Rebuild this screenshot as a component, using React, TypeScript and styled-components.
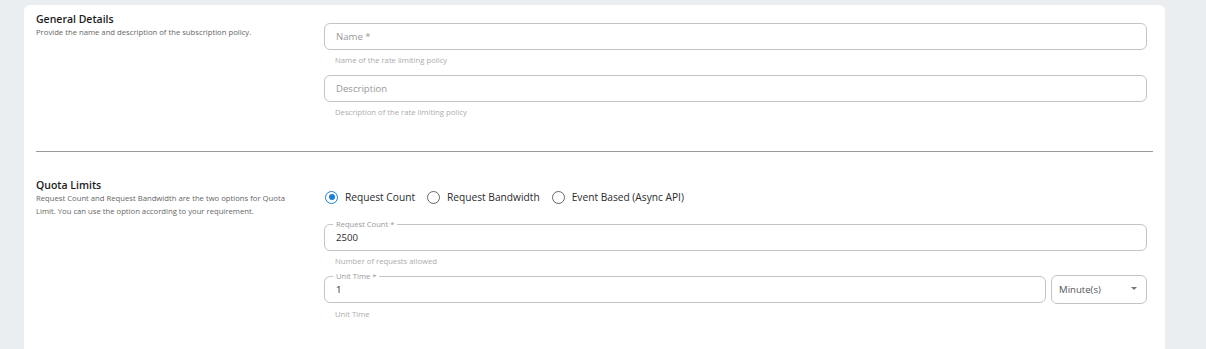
import * as React from "react"
import styled, { createGlobalStyle } from "styled-components"

const GlobalStyle = createGlobalStyle`
  html, body {
    margin: 0;
    padding: 0;
    background: #eaeef1;
    font-family: "Open Sans", "Noto Sans", sans-serif;
  }
`

const Page = styled.div`
  height: 349px;
  overflow: hidden;
  padding: 5px 41px 0 24px;
`

const Card = styled.div`
  background: #fff;
  border-radius: 6px;
  padding: 5px 12px 40px;
  min-height: 360px;
  box-sizing: border-box;
`

const Section = styled.section<{ $top: number }>`
  display: grid;
  grid-template-columns: 262px 1fr;
  column-gap: 26px;
  align-items: start;
  padding: ${p => p.$top}px 6px 0 0;
`

const Intro = styled.div`
  padding-top: 2px;
`

const Title = styled.h3`
  margin: 0;
  font-size: 10.5px;
  line-height: 14px;
  font-weight: 600;
  color: #1c1c1c;
`

const Lead = styled.p`
  margin: 0;
  font-size: 7.7px;
  line-height: 13px;
  color: #666;
`

const Fields = styled.div<{ $top: number }>`
  padding-top: ${p => p.$top}px;
  display: flex;
  flex-direction: column;
`

const FieldRow = styled.div`
  display: flex;
  align-items: flex-start;
  gap: 5px;
`

const Box = styled.div<{ $h?: number }>`
  position: relative;
  flex: 1 0 auto;
  height: ${p => p.$h ?? 27}px;
  border: 1px solid #c4c4c4;
  border-radius: 6px;
  box-sizing: border-box;
  display: flex;
  align-items: center;
  padding: 0 11px;
  font-size: 9.6px;
  color: #2b2b2b;
`

const Placeholder = styled.span`
  color: #999;
`

const Notch = styled.span`
  position: absolute;
  left: 8px;
  top: -5px;
  padding: 0 3px;
  background: #fff;
  font-size: 7.6px;
  line-height: 9px;
  color: #999;
`

const Helper = styled.div`
  font-size: 7.7px;
  line-height: 10px;
  color: #acacac;
  padding: 5px 0 0 11px;
  height: 25px;
  box-sizing: border-box;
`

const SelectBox = styled(Box)`
  flex: 0 0 96px;
  justify-content: space-between;
  padding: 0 9px 0 7px;
  margin-top: -1px;
  color: #555;
`

const Caret = styled.span`
  width: 0;
  height: 0;
  border-left: 3.5px solid transparent;
  border-right: 3.5px solid transparent;
  border-top: 3.5px solid #777;
  margin-top: -3px;
`

const Divider = styled.hr`
  margin: 24px 0 0;
  border: none;
  border-top: 1px solid #9a9a9a;
`

const RadioGroup = styled.div`
  display: flex;
  align-items: center;
  height: 18px;
  margin-bottom: 18px;
`

const RadioItem = styled.label`
  display: flex;
  align-items: center;
  gap: 7px;
  margin-right: 11px;
  font-size: 10.2px;
  color: #2b2b2b;
  cursor: pointer;
`

const Dot = styled.span<{ $on: boolean }>`
  width: 13px;
  height: 13px;
  border-radius: 50%;
  box-sizing: border-box;
  margin-left: 1px;
  border: 1.5px solid ${p => (p.$on ? "#1a7fd6" : "#666")};
  display: flex;
  align-items: center;
  justify-content: center;
  &::after {
    content: "";
    width: 6px;
    height: 6px;
    border-radius: 50%;
    background: ${p => (p.$on ? "#1a7fd6" : "transparent")};
  }
`

const options = ["Request Count", "Request Bandwidth", "Event Based (Async API)"]

export default function App() {
  const [choice, setChoice] = React.useState(0)
  return (
    <>
      <GlobalStyle />
      <Page>
        <Card>
          <Section $top={0}>
            <Intro>
              <Title>General Details</Title>
              <Lead>Provide the name and description of the subscription policy.</Lead>
            </Intro>
            <Fields $top={13}>
              <Box>
                <Placeholder>Name *</Placeholder>
              </Box>
              <Helper>Name of the rate limiting policy</Helper>
              <Box>
                <Placeholder>Description</Placeholder>
              </Box>
              <Helper>Description of the rate limiting policy</Helper>
            </Fields>
          </Section>
          <Divider />
          <Section $top={24}>
            <Intro>
              <Title>Quota Limits</Title>
              <Lead>
                Request Count and Request Bandwidth are the two options for Quota
                Limit. You can use the option according to your requirement.
              </Lead>
            </Intro>
            <Fields $top={12}>
              <RadioGroup>
                {options.map((o, i) => (
                  <RadioItem key={o} onClick={() => setChoice(i)}>
                    <Dot $on={choice === i} />
                    {o}
                  </RadioItem>
                ))}
              </RadioGroup>
              <Box>
                <Notch>Request Count *</Notch>
                2500
              </Box>
              <Helper>Number of requests allowed</Helper>
              <FieldRow>
                <Box>
                  <Notch>Unit Time *</Notch>1
                </Box>
                <SelectBox $h={29}>
                  Minute(s)
                  <Caret />
                </SelectBox>
              </FieldRow>
              <Helper>Unit Time</Helper>
            </Fields>
          </Section>
        </Card>
      </Page>
    </>
  )
}
